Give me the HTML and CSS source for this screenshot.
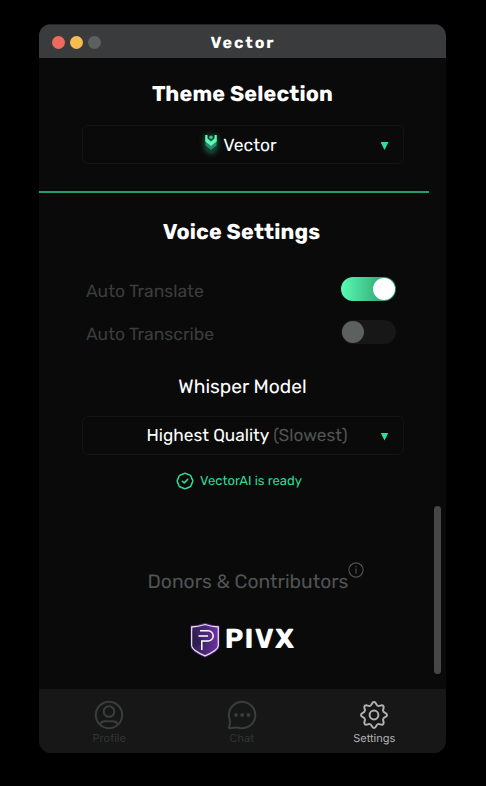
FILE: index.html
```
<!DOCTYPE html>
<html lang="en">
<head>
<meta charset="utf-8">
<title>Vector</title>
<link rel="stylesheet" href="styles.css">
</head>
<body>
<div class="window">
  <header class="titlebar">
    <div class="lights"><i class="light red"></i><i class="light yellow"></i><i class="light gray"></i></div>
    <span class="title">Vector</span>
  </header>
  <main class="content">
    <h2 class="heading theme-heading">Theme Selection</h2>
    <div class="select theme-select">
      <svg class="vector-logo" width="14" height="20" viewBox="0 0 14 20">
        <path d="M1.500 11.500 7 15.500l5.500-4v3.500L7 19.500l-5.500-4.500z" fill="#133e30"/>
        <path d="M1.500 7.500 7 12l5.500-4.500V11.500L7 16l-5.500-4.500z" fill="#278d66"/>
        <path d="M1.200 1h2.300v3.500L7 7.500l3.500-3V1h2.300v6.500L7 12 1.200 7.500z" fill="#59fcb3"/>
        <circle cx="7" cy="3.300" r="1.700" fill="#42c990"/>
      </svg>
      <span class="select-text">Vector</span>
      <i class="caret"></i>
    </div>
    <div class="divider"></div>
    <h2 class="heading voice-heading">Voice Settings</h2>
    <div class="option"><span>Auto Translate</span><div class="toggle on"><i></i></div></div>
    <div class="option"><span>Auto Transcribe</span><div class="toggle"><i></i></div></div>
    <h3 class="model-heading">Whisper Model</h3>
    <div class="select">
      <span class="select-text quality-text">Highest Quality <span class="muted">(Slowest)</span></span>
      <i class="caret"></i>
    </div>
    <div class="status">
      <svg width="18" height="18" viewBox="-9 -9 18 18" fill="none" stroke="#2fd996" stroke-width="1.500" stroke-linecap="round" stroke-linejoin="round">
        <defs><path id="scallop" d="M-2.700-6.700C-1.600-7.150-1.300-7.800 0-7.800S1.600-7.150 2.700-6.700"/></defs>
        <use href="#scallop"/><use href="#scallop" transform="rotate(45)"/><use href="#scallop" transform="rotate(90)"/><use href="#scallop" transform="rotate(135)"/><use href="#scallop" transform="rotate(180)"/><use href="#scallop" transform="rotate(225)"/><use href="#scallop" transform="rotate(270)"/><use href="#scallop" transform="rotate(315)"/>
        <path d="M-2.600.2-.8 1.900 2.700-1.600"/>
      </svg>
      <span>VectorAI is ready</span>
    </div>
    <div class="donors">
      <span>Donors &amp; Contributors</span>
      <svg class="info" width="16" height="16" viewBox="0 0 16 16" fill="none" stroke="#4b4f4f" stroke-width="1.200"><circle cx="8" cy="8" r="7.100"/><path d="M8 6.500v5M8 3.900v1.400"/></svg>
    </div>
    <div class="pivx">
      <svg width="30" height="36" viewBox="0 0 30 36">
        <defs><linearGradient id="shield" x1="0" x2="1"><stop offset="0" stop-color="#322052"/><stop offset=".5" stop-color="#4a2877"/><stop offset="1" stop-color="#6d32a0"/></linearGradient></defs>
        <path d="M15 .8Q22 3.500 29.500 3.500v20.500q0 5.500-14.500 11.500Q.5 29.500.5 24V3.500q7.500 0 14.500-2.700z" fill="#51277b"/>
        <path d="M15 2.500q6.500 2.200 13.300 2.500V23.500q0 4.500-13.300 10.400Q1.700 28 1.700 23.500V5q6.800-.3 13.300-2.500z" fill="url(#shield)" stroke="#e8e0f0" stroke-width="1.300"/>
        <path d="M2.500 8 15 22 2.500 25z" fill="#2b1c48" opacity=".65"/>
        <path d="M10 8.700h8a5.200 5.200 0 0 1 0 10.400h-6.200V28M8.500 13.900h9.500" fill="none" stroke="#fff" stroke-width="1.500"/>
      </svg>
      <span>PIVX</span>
    </div>
    <div class="scroll-thumb"></div>
  </main>
  <nav class="nav">
    <a class="tab"><svg width="30" height="30" viewBox="0 0 30 30"><circle cx="15" cy="15" r="13.200"/><circle cx="15" cy="11.500" r="5.300"/><path d="M5.800 24.200c1.300-2.100 3-3 5.200-3h8c2.200 0 3.900.9 5.200 3"/></svg><span>Profile</span></a>
    <a class="tab"><svg width="30" height="30" viewBox="0 0 30 30"><path d="M1.900 15a13.200 13.200 0 1 1 9.400 12.700c-2.300-.7-5.100.7-8.600.5-.8 0-1-.4-.7-1.100 1.100-2.400 1.200-5.100.6-7.600A13 13 0 0 1 1.900 15z"/><g class="dots"><circle cx="9" cy="15" r="1.900"/><circle cx="15.200" cy="15" r="1.900"/><circle cx="21.400" cy="15" r="1.900"/></g></svg><span>Chat</span></a>
    <a class="tab active"><svg width="30" height="30" viewBox="-15 -15 30 30"><defs><path id="tooth" d="M-3.800-9.200C-1.800-10.030-2.400-13 0-13S1.800-10.030 3.800-9.200"/></defs><use href="#tooth"/><use href="#tooth" transform="rotate(45)"/><use href="#tooth" transform="rotate(90)"/><use href="#tooth" transform="rotate(135)"/><use href="#tooth" transform="rotate(180)"/><use href="#tooth" transform="rotate(225)"/><use href="#tooth" transform="rotate(270)"/><use href="#tooth" transform="rotate(315)"/><circle r="4.400"/></svg><span>Settings</span></a>
  </nav>
</div>
</body>
</html>
```

FILE: styles.css
```
* { box-sizing: border-box; }
body { margin: 0; height: 786px; padding: 24px 40px 33px 39px; background: #000; font-family: Rubik, Roboto, sans-serif; color: #fff; overflow: hidden; text-rendering: geometricPrecision; }
.window { height: 729px; width: 407px; display: flex; flex-direction: column; background: #0a0a0a; border-radius: 12px; overflow: hidden; }
.titlebar { height: 34px; background: #3a3b3c; border-top: 1px solid #232424; display: grid; grid-template-columns: 1fr auto 1fr; align-items: center; }
.lights { display: flex; gap: 5.200px; padding: 1px 0 0 13px; }
.light { width: 13px; height: 13px; border-radius: 50%; }
.red { background: #ee6a5f; }
.yellow { background: #f5bd4f; }
.gray { background: #5b6060; }
.title { font: 700 16px/20px Rubik, Inter, sans-serif; letter-spacing: 1.900px; padding-top: 2px; margin-right: -1px; }
.content { position: relative; height: 631px; }
.heading { margin: 0; text-align: center; font: 700 21.500px/28px Rubik, Inter, sans-serif; white-space: nowrap; }
.theme-heading { padding-top: 23px; letter-spacing: .15px; }
.voice-heading { padding-top: 26px; letter-spacing: .15px; padding-right: 2px; }
.select { position: relative; width: 322px; height: 39px; margin: 0 auto; border: 1.500px solid #141414; border-radius: 6px; display: flex; align-items: center; justify-content: center; font-size: 17.500px; white-space: nowrap; }
.theme-select { margin-top: 16px; }
.vector-logo { margin: -2px 5px 0 -4px; filter: drop-shadow(0 0 3px #287e5d); }
.select-text { line-height: 22px; padding-top: 2px; }
.quality-text { padding: 1px 0 0 9px; font-size: 17.250px; }
.muted { color: #505453; }
.caret { position: absolute; right: 14px; top: 16px; width: 8px; height: 8px; background: #2fdf99; clip-path: polygon(0 0, 100% 0, 50% 100%); }
.divider { width: 390px; height: 1.500px; margin-top: 27px; background: #219d6e; }
.option { height: 27px; margin: 29px 50px 0 47px; display: flex; align-items: center; justify-content: space-between; color: #3b3d3d; font-size: 17.500px; }
.option + .option { margin-top: 16px; }
.option span { padding-top: 5px; }
.toggle { width: 55px; height: 24px; padding: 1px; display: flex; border-radius: 12px; background: #171717; }
.toggle i { width: 22px; height: 22px; border-radius: 50%; background: #5c6160; }
.toggle.on { background: linear-gradient(90deg, #59fcb3, #278b65); justify-content: flex-end; }
.toggle.on i { background: #fff; }
.model-heading { margin: 28px 0 16px; text-align: center; font-size: 19.200px; line-height: 26px; font-weight: 400; }
.status { margin: 16px 0 0; height: 20px; display: flex; align-items: center; justify-content: center; gap: 6px; color: #2fd996; font-size: 13px; padding-right: 7px; }
.status span { padding-top: 1px; }
.donors { margin-top: 70px; height: 40px; display: flex; align-items: flex-start; justify-content: center; color: #505453; font-size: 19.300px; line-height: 26px; padding-left: 26px; }
.donors span { padding-top: 8px; }
.info { margin: 1px -1px 0 0; }
.pivx { margin-top: 21px; display: flex; align-items: center; justify-content: center; gap: 5px; font: 700 27.500px/34px Rubik, "Open Sans", sans-serif; letter-spacing: 1.200px; }
.pivx span { margin-top: -2px; }
.scroll-thumb { position: absolute; right: 5px; top: 448px; width: 7px; height: 168px; border-radius: 4px; background: #464646; }
.nav { height: 64px; display: grid; grid-template-columns: repeat(3, 132.500px); padding-left: 4px; background: #171717; }
.tab { display: flex; flex-direction: column; align-items: center; padding-top: 10.500px; color: #323535; font: 400 11px/14px Inter, sans-serif; }
.tab svg { fill: none; stroke: #3a3d3d; stroke-width: 2; stroke-linejoin: round; }
.tab span { margin-top: 1.500px; }
.tab .dots { fill: #3a3d3d; stroke: none; }
.tab.active { color: #b2b2b2; }
.tab.active svg { stroke: #b2b2b2; }
```
